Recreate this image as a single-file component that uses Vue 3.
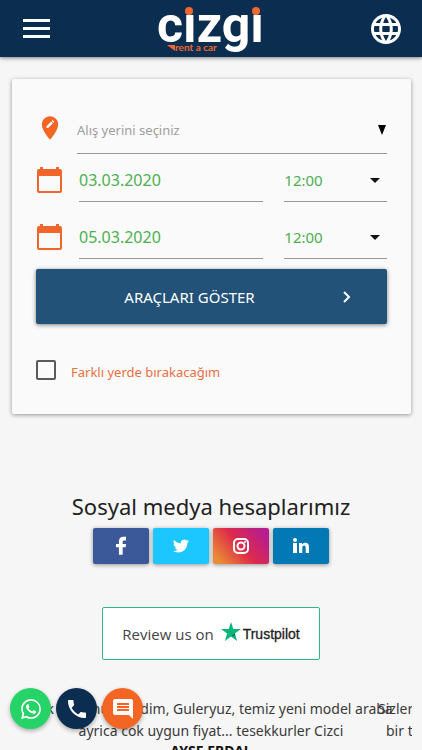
<script setup>
import { ref } from 'vue'

const place = ref('')
const differentReturn = ref(false)
const times = ['10:00', '11:00', '12:00', '13:00']
const rows = ref([
  { id: 'pickup', label: 'Alış', date: '03.03.2020', time: '12:00' },
  { id: 'return', label: 'Dönüş', date: '05.03.2020', time: '12:00' },
])
</script>

<template>
  <div class="page">
    <header class="bar">
      <button class="icon-btn" type="button" aria-label="Menu">
        <svg width="28" height="20" viewBox="0 0 28 20" fill="#fff">
          <path d="M0 0h27v3H0zM0 8h27v3H0zM0 16h27v3H0z" />
        </svg>
      </button>
      <a class="logo" href="#" aria-label="cizgi rent a car">
        <svg width="110" height="56" viewBox="0 0 110 56">
          <text class="logo-name" x="2" y="41">cızgı</text>
          <circle cx="34" cy="10" r="4" fill="#f0682f" />
          <circle cx="101" cy="10" r="4" fill="#f0682f" />
          <path d="M12 44h8v6z" fill="#f0682f" />
          <text class="logo-tag" x="20" y="50">rent a car</text>
        </svg>
      </a>
      <button class="icon-btn" type="button" aria-label="Language">
        <svg width="36" height="36" viewBox="0 0 24 24" fill="#fff">
          <path d="M11.99 2C6.47 2 2 6.48 2 12s4.47 10 9.99 10C17.52 22 22 17.52 22 12S17.52 2 11.99 2zm6.93 6h-2.95c-.32-1.25-.78-2.45-1.38-3.56 1.84.63 3.37 1.91 4.33 3.56zM12 4.04c.83 1.2 1.48 2.53 1.91 3.96h-3.82c.43-1.43 1.08-2.76 1.91-3.96zM4.26 14C4.1 13.36 4 12.69 4 12s.1-1.36.26-2h3.38c-.08.66-.14 1.32-.14 2 0 .68.06 1.34.14 2H4.26zm.82 2h2.95c.32 1.25.78 2.45 1.38 3.56-1.84-.63-3.37-1.9-4.33-3.56zm2.95-8H5.08c.96-1.66 2.49-2.93 4.33-3.56C8.81 5.55 8.35 6.75 8.03 8zM12 19.96c-.83-1.2-1.48-2.53-1.91-3.96h3.82c-.43 1.43-1.08 2.76-1.91 3.96zM14.34 14H9.66c-.09-.66-.16-1.32-.16-2 0-.68.07-1.35.16-2h4.68c.09.65.16 1.32.16 2 0 .68-.07 1.34-.16 2zm.25 5.56c.6-1.11 1.06-2.31 1.38-3.56h2.95c-.96 1.65-2.49 2.93-4.33 3.56zM16.36 14c.08-.66.14-1.32.14-2 0-.68-.06-1.34-.14-2h3.38c.16.64.26 1.31.26 2s-.1 1.36-.26 2h-3.38z" />
        </svg>
      </button>
    </header>

    <main>
      <form class="card" @submit.prevent>
        <div class="place-row">
          <svg class="pin" width="28" height="28" viewBox="0 0 24 24">
            <path d="M12 2C8.14 2 5 5.14 5 9c0 5.25 7 13 7 13s7-7.75 7-13c0-3.86-3.14-7-7-7z" fill="#f26522" />
            <path d="M9 12v-1.5l4-4 1.5 1.5-4 4zM13.5 6l.8-.8 1.5 1.5-.8.8z" fill="#fff" />
          </svg>
          <div class="field">
            <input v-model="place" class="place" type="text" placeholder="Alış yerini seçiniz" aria-label="Alış yeri">
            <svg class="arrow" width="8" height="10" viewBox="0 0 8 10"><path d="M0 0h8L4 10z" fill="#000" /></svg>
          </div>
        </div>

        <div v-for="row in rows" :key="row.id" class="date-row">
          <svg class="calendar" width="27" height="28" viewBox="0 0 27 28">
            <path d="M4 1h3v2h13V1h3v2h1q2 0 2 2v20q0 2-2 2H3q-2 0-2-2V5q0-2 2-2h1zM3 10v15h21V10z" fill="#f0652b" fill-rule="evenodd" />
          </svg>
          <div class="field date">
            <input v-model="row.date" type="text" :aria-label="row.label + ' tarihi'">
          </div>
          <div class="field time">
            <select v-model="row.time" :aria-label="row.label + ' saati'">
              <option v-for="t in times" :key="t">{{ t }}</option>
            </select>
            <svg class="arrow" width="10" height="5" viewBox="0 0 10 5"><path d="M0 0h10L5 5z" fill="#111" /></svg>
          </div>
        </div>

        <button class="submit" type="submit">
          <span>ARAÇLARI GÖSTER</span>
          <svg width="8" height="12" viewBox="0 0 8 12"><path d="M1 1l5 5-5 5" fill="none" stroke="#fff" stroke-width="2" /></svg>
        </button>

        <label class="check">
          <input v-model="differentReturn" type="checkbox">
          <span>Farklı yerde bırakacağım</span>
        </label>
      </form>

      <section class="social">
        <h2>Sosyal medya hesaplarımız</h2>
        <nav>
          <a class="fb" href="#" aria-label="Facebook">
            <svg width="20" height="20" viewBox="0 0 24 24" fill="#fff"><path d="M18 1v4.500h-2.500c-1 0-1.500.500-1.500 1.500V9.500h4l-.5 4h-3.500v9H9.500v-9H6v-4h3.500V6.500c0-3.500 2-5.500 5.200-5.500z" /></svg>
          </a>
          <a class="tw" href="#" aria-label="Twitter">
            <svg width="16" height="16" viewBox="0 0 24 24" fill="#fff"><path d="M23.950 4.570a10 10 0 0 1-2.820.77 4.960 4.960 0 0 0 2.160-2.720c-.95.550-2 .950-3.130 1.180a4.920 4.920 0 0 0-8.380 4.480C7.690 8.090 4.070 6.130 1.640 3.160a4.920 4.920 0 0 0 1.520 6.570 4.900 4.900 0 0 1-2.230-.61v.06a4.920 4.920 0 0 0 3.950 4.830 5 5 0 0 1-2.210.08 4.940 4.940 0 0 0 4.600 3.420A9.870 9.870 0 0 1 0 19.540a13.990 13.990 0 0 0 7.550 2.210c9.050 0 14-7.500 14-13.980 0-.21 0-.42-.02-.63a9.940 9.940 0 0 0 2.460-2.550z" /></svg>
          </a>
          <a class="ig" href="#" aria-label="Instagram">
            <svg width="18" height="18" viewBox="0 0 18 18" fill="none" stroke="#fff" stroke-width="2"><rect x="2" y="2" width="14" height="14" rx="4" /><circle cx="9" cy="9" r="3.500" /><circle cx="13" cy="5" r="1" fill="#fff" stroke="none" /></svg>
          </a>
          <a class="li" href="#" aria-label="LinkedIn">
            <svg width="18" height="18" viewBox="0 0 18 18" fill="#fff"><circle cx="3" cy="3" r="2" /><path d="M1 6h4v10H1zM7 6h3v1.500C11 6.200 12 5.700 13.300 5.700c2.700 0 3.700 1.800 3.700 4.500V16h-3.300v-5c0-1.500-.4-2.400-1.600-2.400S10.300 9.500 10.300 11v5H7z" /></svg>
          </a>
        </nav>
      </section>

      <a class="trust" href="#">
        <span class="review">Review us on</span>
        <svg class="star" width="20" height="19" viewBox="0 0 20 19"><path d="M10 0l2.300 7H20l-6.200 4.500L16.200 19 10 14.500 3.800 19l2.400-7.500L0 7h7.700z" fill="#04b67a" /><path d="M13.800 11.500l.6 1.800L10 14.500z" fill="#045c46" /></svg>
        <span class="brand">Trustpilot</span>
      </a>

      <section class="slides">
        <blockquote class="slide">
          Cok memnun kaldim, Guleryuz, temiz yeni model araba<br>
          ayrica cok uygun fiyat... tesekkurler Cizci
          <strong>AYSE ERDAL</strong>
        </blockquote>
        <blockquote class="slide next">
          Sizlere<br>
          <span>bir t</span>
        </blockquote>
      </section>
    </main>

    <aside class="fabs">
      <a class="wa" href="#" aria-label="WhatsApp">
        <svg width="20" height="20" viewBox="0 0 24 24" fill="#fff"><path d="M17.470 14.380c-.3-.15-1.760-.87-2.030-.97-.27-.1-.47-.15-.67.15-.2.300-.77.970-.94 1.160-.17.200-.35.220-.64.080-.3-.15-1.260-.46-2.390-1.480-.88-.79-1.480-1.760-1.650-2.060-.17-.3-.02-.46.13-.6.130-.14.300-.35.450-.52.150-.17.200-.3.300-.5.100-.2.050-.37-.03-.52-.07-.15-.67-1.610-.91-2.210-.24-.58-.49-.5-.67-.51h-.57c-.2 0-.52.070-.79.370-.27.300-1.040 1.020-1.040 2.480s1.070 2.880 1.210 3.070c.15.200 2.100 3.200 5.080 4.490.71.310 1.260.49 1.690.63.710.23 1.360.2 1.870.12.570-.09 1.760-.72 2-1.410.250-.7.250-1.290.18-1.420-.07-.12-.27-.2-.57-.35M12.050 21.790a9.870 9.870 0 0 1-5.030-1.380l-.36-.21-3.740.98 1-3.650-.24-.37a9.860 9.860 0 0 1-1.510-5.260c0-5.450 4.440-9.880 9.890-9.880a9.890 9.890 0 0 1 9.880 9.890c0 5.450-4.440 9.880-9.890 9.880m8.410-18.300A11.820 11.820 0 0 0 12.050 0C5.500 0 .16 5.330.16 11.890c0 2.100.55 4.140 1.590 5.950L.06 24l6.300-1.650a11.880 11.880 0 0 0 5.690 1.450c6.550 0 11.890-5.340 11.890-11.900a11.820 11.820 0 0 0-3.480-8.410z" /></svg>
      </a>
      <a class="ph" href="#" aria-label="Telefon">
        <svg width="24" height="24" viewBox="0 0 24 24" fill="#fff"><path d="M6.620 10.790c1.440 2.830 3.760 5.140 6.590 6.590l2.200-2.200c.27-.27.67-.36 1.020-.24 1.120.37 2.330.57 3.570.57.550 0 1 .45 1 1V20c0 .55-.45 1-1 1-9.390 0-17-7.610-17-17 0-.55.450-1 1-1h3.500c.550 0 1 .45 1 1 0 1.250.2 2.450.57 3.570.11.350.03.740-.25 1.020l-2.200 2.200z" /></svg>
      </a>
      <a class="ms" href="#" aria-label="Mesaj">
        <svg width="24" height="24" viewBox="0 0 24 24" fill="#fff"><path d="M21.990 4c0-1.100-.89-2-1.990-2H4c-1.100 0-2 .9-2 2v12c0 1.100.9 2 2 2h14l4 4-.01-18zM18 14H6v-2h12v2zm0-3H6V9h12v2zm0-3H6V6h12v2z" /></svg>
      </a>
    </aside>
  </div>
</template>

<style>
body {
  background: #f6f6f6;
}
</style>

<style scoped>
* {
  box-sizing: border-box;
}
.page {
  height: 100vh;
  overflow: hidden;
  color: #212121;
  font-family: "Noto Sans", "Open Sans", sans-serif;
  font-size: 15px;
}
svg {
  display: block;
  flex: none;
}
a {
  color: inherit;
  text-decoration: none;
}
.bar {
  display: flex;
  align-items: center;
  justify-content: space-between;
  height: 57px;
  padding: 0 18px 0 23px;
  background: #0b2d4f;
  box-shadow: 0 1px 4px rgba(0, 0, 0, .5);
}
.icon-btn {
  padding: 0;
  border: 0;
  background: none;
}
.logo-name {
  fill: #fff;
  font: 700 50px Roboto, sans-serif;
}
.logo-tag {
  fill: #f0682f;
  font: 700 10px Lato, sans-serif;
}
.card {
  margin: 22px 11px 0 12px;
  padding: 32px 24px;
  border-radius: 2px;
  background: #fafafa;
  box-shadow: 0 1px 4px rgba(0, 0, 0, .4);
}
.place-row,
.date-row {
  display: flex;
  align-items: center;
}
.place-row {
  gap: 13px;
  height: 43px;
}
.pin {
  align-self: flex-start;
  margin-top: 3px;
}
.field {
  display: flex;
  align-items: center;
  border-bottom: 1px solid #999;
}
.place-row .field {
  flex: 1;
  height: 43px;
  padding-bottom: 4px;
}
.date-row {
  height: 48px;
}
.calendar {
  margin-top: 4px;
}
.date-row + .date-row {
  margin-top: 9px;
}
.date-row .field {
  height: 44px;
  align-self: flex-end;
}
.date {
  flex: 185;
  margin-left: 16px;
}
.time {
  flex: 103;
  margin-left: 21px;
}
input[type="text"],
select {
  flex: 1;
  width: 0;
  min-width: 0;
  padding: 0;
  border: 0;
  outline: 0;
  background: none;
  color: #4caf50;
  font: inherit;
  appearance: none;
}
.date input {
  font-size: 16px;
}
.place-row input[type="text"] {
  font-size: 13px;
  color: #212121;
}
.place::placeholder {
  color: #9e9e9e;
}
.arrow {
  margin-right: 1px;
}
.time .arrow {
  margin: 2px 7px 0 0;
}
.submit {
  display: flex;
  align-items: center;
  width: 100%;
  height: 55px;
  margin-top: 10px;
  padding: 0 36px 0 0;
  border: 0;
  border-radius: 2px;
  background: #225277;
  box-shadow: 0 1px 4px rgba(0, 0, 0, .5);
  color: #fff;
  font: inherit;
}
.submit span {
  flex: 1;
}
.check {
  display: flex;
  align-items: center;
  gap: 15px;
  margin-top: 34px;
  color: #e8703f;
  font-size: 13px;
  line-height: 20px;
}
.check input {
  appearance: none;
  width: 20px;
  height: 20px;
  margin: 0;
  border: 2px solid #5a5a5a;
  border-radius: 2px;
}
.check input:checked {
  background: #f26522;
}
.check span {
  padding-top: 4px;
}
.social {
  margin-top: 76px;
}
h2 {
  margin: 0;
  font-size: 22px;
  font-weight: 400;
  line-height: 32px;
  text-align: center;
}
nav {
  display: flex;
  justify-content: center;
  gap: 4px;
  margin-top: 6px;
}
nav a {
  display: flex;
  align-items: center;
  justify-content: center;
  width: 56px;
  height: 36px;
  border-radius: 2px;
  box-shadow: 0 1px 4px rgba(0, 0, 0, .4);
}
.fb {
  background: #3b5998;
}
.tw {
  background: #1cc7ff;
}
.ig {
  background: linear-gradient(50deg, #eb8a35 10%, #dd2a4b 50%, #b51d90 90%);
}
.li {
  background: #0279b5;
}
.trust {
  display: flex;
  align-items: center;
  justify-content: center;
  width: 218px;
  height: 53px;
  margin: 43px auto 0;
  border: 1px solid #2dba85;
  border-radius: 2px;
  background: #fff;
}
.review {
  margin-right: 7px;
  color: #444;
  font: 500 15px "Open Sans", sans-serif;
}
.star {
  margin-bottom: 4px;
}
.brand {
  margin-left: 2px;
  font: 14px "Liberation Sans", sans-serif;
  -webkit-text-stroke: 0.3px #222;
}
.slides {
  display: flex;
  margin: 38px 10px 0;
  overflow: hidden;
  color: #3a3a3a;
  font-size: 14px;
  line-height: 22px;
  white-space: nowrap;
}
.slide {
  flex: none;
  width: 100%;
  margin: 0;
  text-align: center;
}
.slide strong {
  display: block;
  color: #111;
  line-height: 18px;
}
.next {
  margin-left: -34px;
  text-align: left;
}
.next span {
  padding-left: 8px;
}
.fabs {
  position: fixed;
  bottom: 21px;
  left: 10px;
  display: flex;
  gap: 5px;
}
.fabs a {
  display: flex;
  align-items: center;
  justify-content: center;
  width: 41px;
  height: 41px;
  border-radius: 50%;
  box-shadow: 0 2px 4px rgba(0, 0, 0, .3);
}
.wa {
  background: #25d366;
}
.ph {
  background: #0b2d4f;
}
.ms {
  background: #f26522;
}
</style>
